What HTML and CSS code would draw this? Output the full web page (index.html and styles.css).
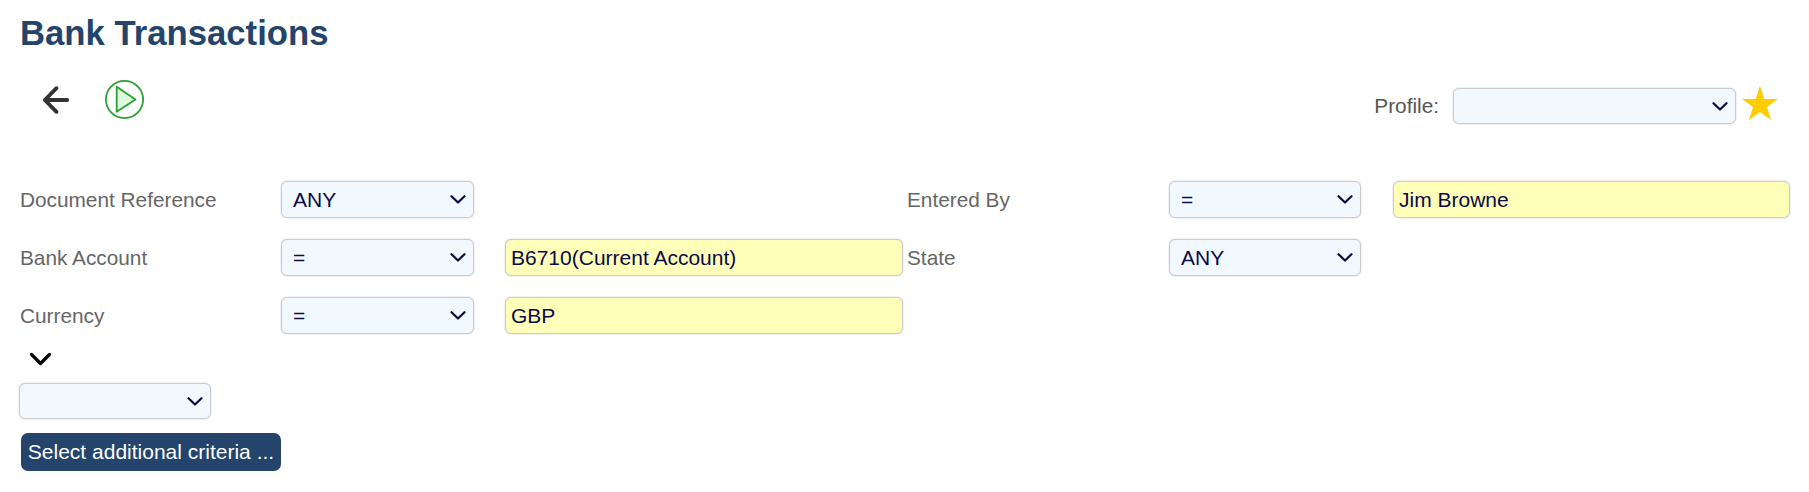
FILE: index.html
```html
<!DOCTYPE html>
<html lang="en">
<head>
<meta charset="utf-8">
<title>Bank Transactions</title>
<link rel="stylesheet" href="styles.css">
</head>
<body>
<h1 class="title">Bank Transactions</h1>
<div class="toolbar">
  <div class="actions">
    <svg class="icon-back" width="30" height="30" viewBox="0 0 30 30" aria-label="Back"><path d="M25.200 15H3.200M14.500 3.200 2.800 15 14.500 26.800" fill="none" stroke="#333" stroke-width="3.900" stroke-linecap="round" stroke-linejoin="round"/></svg>
    <svg class="icon-run" width="40" height="40" viewBox="0 0 40 40" aria-label="Run"><circle cx="19.500" cy="19.500" r="18.600" fill="#fff" stroke="#2f9e36" stroke-width="1.800"/><path d="M11.700 6.700 30.500 19.500 11.700 31.800Z" fill="#dcfadc" stroke="#2f9e36" stroke-width="1.800" stroke-linejoin="round"/></svg>
  </div>
  <div class="profile">
    <label class="profile-label" for="profile">Profile:</label>
    <select class="field profile-select" id="profile"><option></option></select>
    <svg class="star" width="36" height="34" viewBox="0 0 36 34" aria-label="Favourite"><path d="M18 0l4.300 12.900H36L25 21l4 13-11-8-11 8 4-13L0 12.900h13.700Z" fill="#fc0"/></svg>
  </div>
</div>
<div class="criteria">
  <span class="label">Document Reference</span>
  <select class="field op"><option>ANY</option></select>
  <span></span>
  <span class="label">Entered By</span>
  <select class="field op op-right"><option>=</option></select>
  <input class="field value value-right" value="Jim Browne">

  <span class="label">Bank Account</span>
  <select class="field op"><option>=</option></select>
  <input class="field value" value="B6710(Current Account)">
  <span class="label">State</span>
  <select class="field op op-right"><option>ANY</option></select>
  <span></span>

  <span class="label">Currency</span>
  <select class="field op"><option>=</option></select>
  <input class="field value" value="GBP">
</div>
<svg class="expand" width="24" height="15" viewBox="0 0 24 15" aria-label="Expand"><path d="M2.500 2.500 11.500 11.500 20.500 2.500" fill="none" stroke="#000" stroke-width="3.200" stroke-linecap="round" stroke-linejoin="round"/></svg>
<select class="field extra"><option></option></select>
<button class="add" type="button">Select additional criteria ...</button>
</body>
</html>
```
FILE: styles.css
```css
* { box-sizing: border-box; }
html, body { margin: 0; padding: 0; }
body {
  width: 1809px;
  height: 492px;
  overflow: hidden;
  padding: 14px 0 0 20px;
  background: #fff;
  font-family: "Liberation Sans", Arial, sans-serif;
  font-size: 20.8px;
  color: #666;
}
.title {
  margin: 0;
  font-size: 34.7px;
  line-height: 38px;
  font-weight: 700;
  color: #24446b;
}
.toolbar {
  display: flex;
  justify-content: space-between;
  align-items: flex-start;
  height: 103px;
  margin-top: 26px;
  padding-right: 31px;
}
.actions {
  display: flex;
  align-items: center;
  gap: 33px;
  padding-left: 22px;
  margin-top: 2px;
}
.profile {
  display: flex;
  align-items: flex-start;
  margin-top: 10px;
}
.profile-label { color: #555; margin: 7px 14px 0 0; line-height: 22px; }
.star { margin: -2px 0 0 6px; }
.field {
  height: 37px;
  border: 1px solid #ccc;
  border-radius: 6px;
  background-color: #f2f9fe;
  color: #0a0a46;
  font-family: inherit;
  font-size: 21px;
  box-shadow: 0 0 2px rgba(0, 0, 0, .2);
  outline: none;
}
select.field {
  appearance: none;
  padding: 0 28px 0 11px;
  background-image: url("data:image/svg+xml,%3Csvg xmlns='http://www.w3.org/2000/svg' width='16' height='9' viewBox='0 0 16 9'%3E%3Cpath d='M1.500 1.200 8 7.500 14.500 1.200' fill='none' stroke='%230a0a46' stroke-width='2.200' stroke-linecap='round' stroke-linejoin='round'/%3E%3C/svg%3E");
  background-repeat: no-repeat;
  background-position: right 7px center;
}
.profile-select { width: 283px; height: 36px; }
.criteria {
  display: grid;
  grid-template-columns: 261px 224px 402px 262px 224px 397px;
  grid-auto-rows: 37px;
  row-gap: 21px;
  align-items: center;
}
.op { width: 193px; }
.op-right { width: 192px; }
.value {
  width: 398px;
  background: #ffffb9;
  padding: 0 5px;
}
.value-right { width: 397px; }
.expand { display: block; margin: 18px 0 0 9px; }
.extra { display: block; width: 192px; height: 36px; margin: 16px 0 0 -1px; }
.add {
  display: block;
  width: 260px;
  height: 38px;
  margin: 14px 0 0 1px;
  padding: 0;
  border: 0;
  border-radius: 7px;
  background: #24446b;
  color: #fff;
  font-family: inherit;
  font-size: 21px;
  text-align: center;
}
```
